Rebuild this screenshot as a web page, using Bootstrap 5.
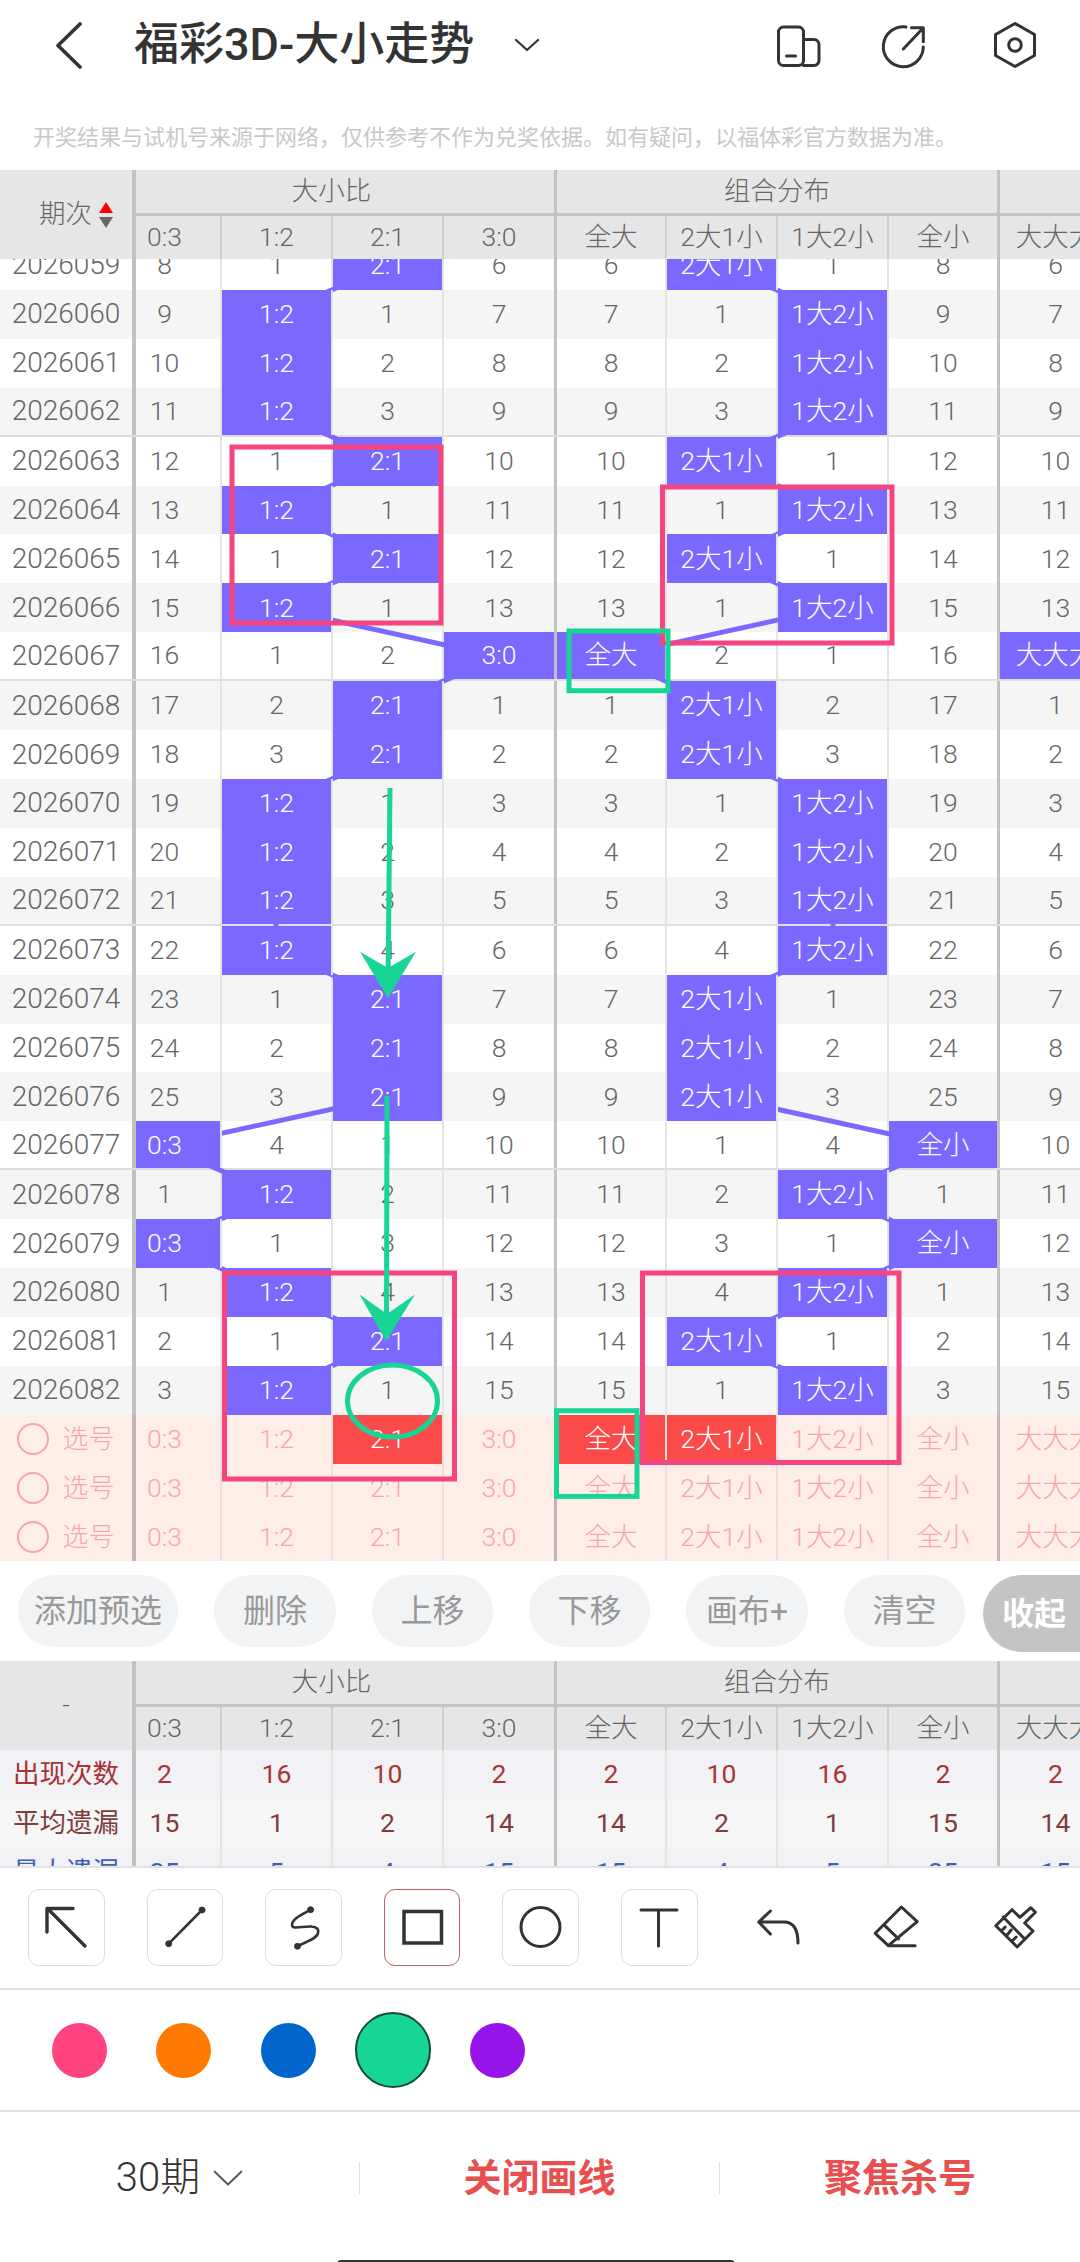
<!doctype html>
<html lang="zh-CN">
<head>
<meta charset="utf-8">
<title>福彩3D-大小走势</title>
<link rel="stylesheet" href="https://cdn.jsdelivr.net/npm/bootstrap@5.3.0/dist/css/bootstrap.min.css">
<style>
html,body{background:#fff;}
body{width:1080px;height:2262px;overflow:hidden;font-family:Roboto,"Noto Sans CJK SC",sans-serif;color:#666;font-weight:300;}
.app-nav{height:90px;padding-left:55px;padding-right:41px;}
.back-ic{width:28px;height:48px;}
.page-title{margin:0 0 0 51px;font-size:45px;font-weight:500;color:#333;font-family:Roboto,"Noto Sans CJK SC",sans-serif;line-height:1.2;}
.title-chev{margin-left:40px;width:26px;height:14px;}
.nav-ic{width:48px;height:48px;}
.nav-ic2{margin-left:56.5px;}
.nav-ic3{margin-left:64px;}
.notice{padding:32px 0 16px 33px;height:80px;font-size:22px;line-height:32px;color:#c8c8c8;white-space:nowrap;font-weight:400;}
.thd,.trow{display:grid;grid-template-columns:136px 86px 111px 111px 113px 110px 111px 111px 111px 111px;width:1111px;font-size:26.5px;}
.thd{grid-template-rows:46px 43px;background:#e6e6e6;height:89px;line-height:1;}
.thd>div{display:flex;align-items:center;justify-content:center;white-space:nowrap;}
.th-corner{grid-row:span 2;border-right:4px solid #c2c2c2;}
.th-corner.sorted{padding-left:20px;}
.th-group{grid-column:span 4;border-bottom:3px solid #c4c4c4;border-right:3px solid #c2c2c2;}
.th-group.first{padding-right:27px;}
.th-rest{grid-column:10;border-bottom:3px solid #c4c4c4;}
.th-sub{border-right:2px solid #cfcfcf;}
.th-sub.first{padding-right:27px;}
.th-sub.end{border-right:3px solid #c2c2c2;}
.sort-ic{margin-left:7px;width:14px;height:26px;}
.chart-view{height:1303px;}
.chart-rows{margin-top:-18px;}
.trow{height:48.91px;line-height:1;white-space:nowrap;}
.trow>div{display:flex;align-items:center;justify-content:center;border-right:2px solid #e4e4e4;}
.trow>div:nth-child(1){border-right:4px solid #c2c2c2;}
.chart-rows .trow>div:nth-child(1){font-size:28px;}
.chart-rows .trow.pick>div:nth-child(1){font-size:26px;}
.trow>div:nth-child(2){padding-right:27px;}
.trow>div:nth-child(5),.trow>div:nth-child(9){border-right:3px solid #c2c2c2;}
.trow>div:nth-child(10){border-right:0;}
.chart-rows .trow:nth-child(even){background:#f5f5f5;}
.chart-rows .trow.sep{border-bottom:2px solid #dedede;}
.trow>div.hit{background:#7b69ff;color:#fff;position:relative;z-index:2;}
.chart-rows .trow.pick{background:#ffeee8;color:#f7a6a6;}
.trow.pick>div{border-right-color:#e8e0dc;}
.trow.pick>div:nth-child(1),.trow.pick>div:nth-child(5),.trow.pick>div:nth-child(9){border-right-color:#bdb8b6;}
.trow>div.red{background:#fa4b4a;color:#fff;}
.pick-dot{width:32px;height:32px;border:2px solid #f6a5a5;margin-right:13px;flex:none;}
.line-layer{position:absolute;left:0;top:0;z-index:1;}
.mark-layer{position:absolute;left:0;top:0;z-index:3;}
.tool-strip{height:99px;padding:13px 0 0 18px;gap:36px;}
.soft-pill{height:72px;padding:0;border:0;background:#f2f3f5;color:#999;font-size:32px;font-weight:400;line-height:1;flex:none;}
.w-a{width:160px;}.w-b{width:122px;}.w-c{width:121px;}
.fold-pill{height:77px;width:140px;margin-left:-18px;padding:0 0 0 19px;text-align:left;border:0;background:#c4c4c4;color:#fff;font-size:32px;font-weight:700;line-height:1;flex:none;}
.stat-view{height:205px;}
.stat-rows .trow{height:49px;}
.stat-rows .trow:nth-child(1){background:#f1f1f6;color:#a83434;font-weight:400;}
.stat-rows .trow:nth-child(2){background:#f6f6f6;color:#7f3c3c;font-weight:400;}
.stat-rows .trow:nth-child(3){background:#f1f1f6;color:#3c62b3;font-weight:400;}
.rule{height:2px;background:#e2e2e2;}
.draw-tools{height:120px;padding:21px 0 0 28px;gap:42px;}
.draw-box{width:76.6px;height:77px;flex:none;border:1px solid transparent;border-radius:11px;}
.draw-box.boxed{border-color:#dcdcdc;}
.draw-box.on{border-color:#b86464;}
.draw-box svg{display:block;position:absolute;left:-1px;top:-1px;width:76.6px;height:77px;fill:none;stroke:#333;stroke-width:3;stroke-linecap:round;stroke-linejoin:round;}
.swatches{height:120px;padding-left:27px;}
.swatch-cell{width:104.5px;}
.swatch{width:55px;height:55px;}
.swatch.big{width:76.5px;height:76.5px;border:2px solid #174a3a;}
.swatch-a{background:#ff4480;}.swatch-b{background:#ff7a00;}.swatch-c{background:#0066cc;}.swatch-d{background:#17d595;}.swatch-e{background:#9613ea;}
.foot-bar{height:120px;padding-top:12px;}
.foot-cell{height:32px;line-height:32px;}
.foot-cell.sep-r{border-right:1px solid #e2e2e2;}
.foot-num{font-size:40px;color:#333;font-weight:300;}
.foot-red{color:#e8504f;font-weight:700;font-size:38px;}
.foot-chev{width:30px;height:16px;margin-left:13px;}
.home-bar{width:398px;height:4px;margin:28px 0 0 337px;background:#333;border-radius:4px 4px 0 0;}
</style>
</head>
<body>
<nav class="app-nav d-flex align-items-center">
  <svg class="back-ic" viewBox="0 0 28 48" fill="none" stroke="#333" stroke-width="3.6" stroke-linecap="round" stroke-linejoin="round"><path d="M25 3 3 24.5 25 46"/></svg>
  <h1 class="page-title">福彩3D-大小走势</h1>
  <svg class="title-chev" viewBox="0 0 26 14" fill="none" stroke="#333" stroke-width="2.2" stroke-linecap="round" stroke-linejoin="round"><path d="M2 2 13 12 24 2"/></svg>
  <div class="ms-auto d-flex">
    <svg class="nav-ic" viewBox="0 0 48 48" fill="none" stroke="#333" stroke-width="3" stroke-linecap="round" stroke-linejoin="round"><rect x="3.5" y="6" width="25" height="38.5" rx="5"/><path d="M28.5 18.5H39a5 5 0 0 1 5 5V39.500a5 5 0 0 1-5 5H28.500M11.500 35h9"/></svg>
    <svg class="nav-ic nav-ic2" viewBox="0 0 48 48" fill="none" stroke="#333" stroke-width="3" stroke-linecap="round" stroke-linejoin="round"><path d="M27 5.900A20 20 0 1 0 44.300 26M24.300 28 43.700 7.500M32.500 6.700H44.300V20.700"/></svg>
    <svg class="nav-ic nav-ic3" viewBox="0 0 48 48" fill="none" stroke="#333" stroke-width="3" stroke-linejoin="round"><path d="M24 2.500 43.500 13.500V34.500L24 45.500 4.500 34.500V13.500Z"/><circle cx="24" cy="24" r="6.300"/></svg>
  </div>
</nav>
<p class="notice m-0">开奖结果与试机号来源于网络，仅供参考不作为兑奖依据。如有疑问，以福体彩官方数据为准。</p>

<div class="thd">
  <div class="th-corner sorted">期次<svg class="sort-ic" viewBox="0 0 14 26"><path d="M7 0 14 11H0Z" fill="#f00"/><path d="M0 15H14L7 26Z" fill="#666"/></svg></div>
  <div class="th-group first">大小比</div><div class="th-group">组合分布</div><div class="th-rest"></div>
  <div class="th-sub first">0:3</div><div class="th-sub">1:2</div><div class="th-sub">2:1</div><div class="th-sub end">3:0</div><div class="th-sub">全大</div><div class="th-sub">2大1小</div><div class="th-sub">1大2小</div><div class="th-sub end">全小</div><div>大大大</div>
</div>

<div class="chart-view position-relative overflow-hidden">
  <div class="chart-rows">
    <div class="trow"><div>2026059</div><div>8</div><div>1</div><div class="hit">2:1</div><div>6</div><div>6</div><div class="hit">2大1小</div><div>1</div><div>8</div><div>6</div></div>
    <div class="trow"><div>2026060</div><div>9</div><div class="hit">1:2</div><div>1</div><div>7</div><div>7</div><div>1</div><div class="hit">1大2小</div><div>9</div><div>7</div></div>
    <div class="trow"><div>2026061</div><div>10</div><div class="hit">1:2</div><div>2</div><div>8</div><div>8</div><div>2</div><div class="hit">1大2小</div><div>10</div><div>8</div></div>
    <div class="trow sep"><div>2026062</div><div>11</div><div class="hit">1:2</div><div>3</div><div>9</div><div>9</div><div>3</div><div class="hit">1大2小</div><div>11</div><div>9</div></div>
    <div class="trow"><div>2026063</div><div>12</div><div>1</div><div class="hit">2:1</div><div>10</div><div>10</div><div class="hit">2大1小</div><div>1</div><div>12</div><div>10</div></div>
    <div class="trow"><div>2026064</div><div>13</div><div class="hit">1:2</div><div>1</div><div>11</div><div>11</div><div>1</div><div class="hit">1大2小</div><div>13</div><div>11</div></div>
    <div class="trow"><div>2026065</div><div>14</div><div>1</div><div class="hit">2:1</div><div>12</div><div>12</div><div class="hit">2大1小</div><div>1</div><div>14</div><div>12</div></div>
    <div class="trow"><div>2026066</div><div>15</div><div class="hit">1:2</div><div>1</div><div>13</div><div>13</div><div>1</div><div class="hit">1大2小</div><div>15</div><div>13</div></div>
    <div class="trow sep"><div>2026067</div><div>16</div><div>1</div><div>2</div><div class="hit">3:0</div><div class="hit">全大</div><div>2</div><div>1</div><div>16</div><div class="hit">大大大</div></div>
    <div class="trow"><div>2026068</div><div>17</div><div>2</div><div class="hit">2:1</div><div>1</div><div>1</div><div class="hit">2大1小</div><div>2</div><div>17</div><div>1</div></div>
    <div class="trow"><div>2026069</div><div>18</div><div>3</div><div class="hit">2:1</div><div>2</div><div>2</div><div class="hit">2大1小</div><div>3</div><div>18</div><div>2</div></div>
    <div class="trow"><div>2026070</div><div>19</div><div class="hit">1:2</div><div>1</div><div>3</div><div>3</div><div>1</div><div class="hit">1大2小</div><div>19</div><div>3</div></div>
    <div class="trow"><div>2026071</div><div>20</div><div class="hit">1:2</div><div>2</div><div>4</div><div>4</div><div>2</div><div class="hit">1大2小</div><div>20</div><div>4</div></div>
    <div class="trow sep"><div>2026072</div><div>21</div><div class="hit">1:2</div><div>3</div><div>5</div><div>5</div><div>3</div><div class="hit">1大2小</div><div>21</div><div>5</div></div>
    <div class="trow"><div>2026073</div><div>22</div><div class="hit">1:2</div><div>4</div><div>6</div><div>6</div><div>4</div><div class="hit">1大2小</div><div>22</div><div>6</div></div>
    <div class="trow"><div>2026074</div><div>23</div><div>1</div><div class="hit">2:1</div><div>7</div><div>7</div><div class="hit">2大1小</div><div>1</div><div>23</div><div>7</div></div>
    <div class="trow"><div>2026075</div><div>24</div><div>2</div><div class="hit">2:1</div><div>8</div><div>8</div><div class="hit">2大1小</div><div>2</div><div>24</div><div>8</div></div>
    <div class="trow"><div>2026076</div><div>25</div><div>3</div><div class="hit">2:1</div><div>9</div><div>9</div><div class="hit">2大1小</div><div>3</div><div>25</div><div>9</div></div>
    <div class="trow sep"><div>2026077</div><div class="hit">0:3</div><div>4</div><div>1</div><div>10</div><div>10</div><div>1</div><div>4</div><div class="hit">全小</div><div>10</div></div>
    <div class="trow"><div>2026078</div><div>1</div><div class="hit">1:2</div><div>2</div><div>11</div><div>11</div><div>2</div><div class="hit">1大2小</div><div>1</div><div>11</div></div>
    <div class="trow"><div>2026079</div><div class="hit">0:3</div><div>1</div><div>3</div><div>12</div><div>12</div><div>3</div><div>1</div><div class="hit">全小</div><div>12</div></div>
    <div class="trow"><div>2026080</div><div>1</div><div class="hit">1:2</div><div>4</div><div>13</div><div>13</div><div>4</div><div class="hit">1大2小</div><div>1</div><div>13</div></div>
    <div class="trow"><div>2026081</div><div>2</div><div>1</div><div class="hit">2:1</div><div>14</div><div>14</div><div class="hit">2大1小</div><div>1</div><div>2</div><div>14</div></div>
    <div class="trow"><div>2026082</div><div>3</div><div class="hit">1:2</div><div>1</div><div>15</div><div>15</div><div>1</div><div class="hit">1大2小</div><div>3</div><div>15</div></div>
    <div class="trow pick"><div><span class="pick-dot rounded-circle"></span>选号</div><div>0:3</div><div>1:2</div><div class="red">2:1</div><div>3:0</div><div class="red">全大</div><div class="red">2大1小</div><div>1大2小</div><div>全小</div><div>大大大</div></div>
    <div class="trow pick"><div><span class="pick-dot rounded-circle"></span>选号</div><div>0:3</div><div>1:2</div><div>2:1</div><div>3:0</div><div>全大</div><div>2大1小</div><div>1大2小</div><div>全小</div><div>大大大</div></div>
    <div class="trow pick"><div><span class="pick-dot rounded-circle"></span>选号</div><div>0:3</div><div>1:2</div><div>2:1</div><div>3:0</div><div>全大</div><div>2大1小</div><div>1大2小</div><div>全小</div><div>大大大</div></div>
  </div>
  <svg class="line-layer" width="1080" height="1303" viewBox="0 258 1080 1303" fill="none" stroke="#7b69ff" stroke-width="5">
    <polyline points="387.5,264.5 276,313.4 276,362.3 276,411.2 387.5,460.1 276,509 387.5,557.9 276,606.8 498.5,655.7 387.5,704.6 387.5,753.6 276,802.5 276,851.4 276,900.3 276,949.2 387.5,998.1 387.5,1047 387.5,1095.900 164.6,1144.800 276,1193.700 164.6,1242.600 276,1291.500 387.5,1340.500 276,1389.400"/>
    <polyline points="721,264.5 833,313.4 833,362.3 833,411.2 721,460.1 833,509 721,557.9 833,606.8 611,655.7 721,704.6 721,753.6 833,802.5 833,851.4 833,900.3 833,949.2 721,998.1 721,1047 721,1095.900 943.500,1144.800 833,1193.700 943.500,1242.600 833,1291.500 721,1340.500 833,1389.400"/>
  </svg>
  <svg class="mark-layer" width="1080" height="1303" viewBox="0 259 1080 1303" fill="none">
    <g stroke="#f5447f" stroke-width="5">
      <rect x="232" y="447" width="209" height="176"/>
      <rect x="662.5" y="487" width="229.5" height="156"/>
      <rect x="224.5" y="1273" width="230" height="206"/>
      <rect x="642.5" y="1273" width="256.500" height="189.500"/>
    </g>
    <g stroke="#17d595" stroke-width="5">
      <rect x="569" y="631" width="99" height="59.700"/>
      <rect x="556.500" y="1410.700" width="80.500" height="85.700"/>
      <ellipse cx="392.500" cy="1401" rx="45" ry="36"/>
    </g>
    <g stroke="#17d595" stroke-width="5">
      <path d="M390 788 388 985"/>
      <path d="M387 1096 386.500 1325"/>
    </g>
    <g fill="#17d595">
      <path d="M360 951.700 388 968 416 951.700 388 998Z"/>
      <path d="M359.500 1294.600 387 1314 415 1294.600 386 1341Z"/>
    </g>
  </svg>
</div>

<div class="tool-strip d-flex align-items-start overflow-hidden">
  <button type="button" class="btn rounded-pill soft-pill w-a">添加预选</button>
  <button type="button" class="btn rounded-pill soft-pill w-b">删除</button>
  <button type="button" class="btn rounded-pill soft-pill w-c">上移</button>
  <button type="button" class="btn rounded-pill soft-pill w-c">下移</button>
  <button type="button" class="btn rounded-pill soft-pill w-b">画布+</button>
  <button type="button" class="btn rounded-pill soft-pill w-c">清空</button>
  <button type="button" class="btn rounded-pill fold-pill">收起</button>
</div>

<div class="stat-view overflow-hidden">
  <div class="thd">
    <div class="th-corner">-</div>
    <div class="th-group first">大小比</div><div class="th-group">组合分布</div><div class="th-rest"></div>
    <div class="th-sub first">0:3</div><div class="th-sub">1:2</div><div class="th-sub">2:1</div><div class="th-sub end">3:0</div><div class="th-sub">全大</div><div class="th-sub">2大1小</div><div class="th-sub">1大2小</div><div class="th-sub end">全小</div><div>大大大</div>
  </div>
  <div class="stat-rows">
    <div class="trow"><div>出现次数</div><div>2</div><div>16</div><div>10</div><div>2</div><div>2</div><div>10</div><div>16</div><div>2</div><div>2</div></div>
    <div class="trow"><div>平均遗漏</div><div>15</div><div>1</div><div>2</div><div>14</div><div>14</div><div>2</div><div>1</div><div>15</div><div>14</div></div>
    <div class="trow"><div>最大遗漏</div><div>25</div><div>5</div><div>4</div><div>15</div><div>15</div><div>4</div><div>5</div><div>25</div><div>15</div></div>
  </div>
</div>
<div class="rule"></div>

<div class="draw-tools d-flex align-items-start">
  <div class="draw-box boxed position-relative"><svg viewBox="0 0 76.600 77"><path d="M19 43V19.500H45M20 20 57 57" stroke-width="3.400"/></svg></div>
  <div class="draw-box boxed position-relative"><svg viewBox="0 0 76.600 77"><path d="M21.700 54.700 55 21" stroke-width="2.600"/><circle cx="21.700" cy="54.700" r="3" fill="#333" stroke-width="1"/><circle cx="55" cy="21" r="3" fill="#333" stroke-width="1"/></svg></div>
  <div class="draw-box boxed position-relative"><svg viewBox="0 0 76.600 77"><path d="M45.600 20.700C36 26 27 30 27 36 27 41 38 37 46 37.500 52 38 54 40 53 44 52 50 40 53 32.500 57.300" stroke-width="2.600"/><circle cx="45.600" cy="20.700" r="3" fill="#333" stroke-width="1"/><circle cx="32.500" cy="57.300" r="3" fill="#333" stroke-width="1"/></svg></div>
  <div class="draw-box boxed on position-relative"><svg viewBox="0 0 76.600 77"><rect x="20" y="22.500" width="37.500" height="31.500" stroke-width="3.500" stroke-linejoin="miter"/></svg></div>
  <div class="draw-box boxed position-relative"><svg viewBox="0 0 76.600 77"><circle cx="38.500" cy="38" r="19.500"/></svg></div>
  <div class="draw-box boxed position-relative"><svg viewBox="0 0 76.600 77"><path d="M20 21H56M37.500 21V57"/></svg></div>
  <div class="draw-box position-relative"><svg viewBox="0 0 76.600 77"><path d="M30.400 22 18.700 33 30.400 45M18.700 33H44C53 33 58 40 58 54"/></svg></div>
  <div class="draw-box position-relative"><svg viewBox="0 0 76.600 77"><path d="M43.400 18 59.200 32.700 30.300 56.700 17.200 44.300ZM26.800 36.700 40.600 50M30.300 56.700H57.100"/></svg></div>
  <div class="draw-box position-relative"><svg viewBox="0 0 76.600 77"><path d="M18.800 36.700 35 20.700 42.900 28.300 53.900 18.700 58.400 23.300 47.700 34 56 42 40.200 58ZM26.200 28 47.700 50M24.200 42 28.200 38M29.200 47 34.200 41M34.700 52.500 39.200 48"/></svg></div>
</div>
<div class="rule"></div>

<div class="swatches d-flex align-items-center">
  <div class="swatch-cell d-flex justify-content-center"><span class="swatch rounded-circle swatch-a"></span></div>
  <div class="swatch-cell d-flex justify-content-center"><span class="swatch rounded-circle swatch-b"></span></div>
  <div class="swatch-cell d-flex justify-content-center"><span class="swatch rounded-circle swatch-c"></span></div>
  <div class="swatch-cell d-flex justify-content-center"><span class="swatch big rounded-circle swatch-d"></span></div>
  <div class="swatch-cell d-flex justify-content-center"><span class="swatch rounded-circle swatch-e"></span></div>
</div>
<div class="rule"></div>

<div class="foot-bar row g-0 align-items-center">
  <div class="col-4 foot-cell sep-r d-flex align-items-center justify-content-center"><span class="foot-num">30期</span><svg class="foot-chev" viewBox="0 0 30 16" fill="none" stroke="#555" stroke-width="1.800" stroke-linecap="round" stroke-linejoin="round"><path d="M1.500 1.500 15 14.500 28.500 1.500"/></svg></div>
  <div class="col-4 foot-cell sep-r text-center foot-red">关闭画线</div>
  <div class="col-4 foot-cell text-center foot-red">聚焦杀号</div>
</div>
<div class="home-bar"></div>
</body>
</html>
